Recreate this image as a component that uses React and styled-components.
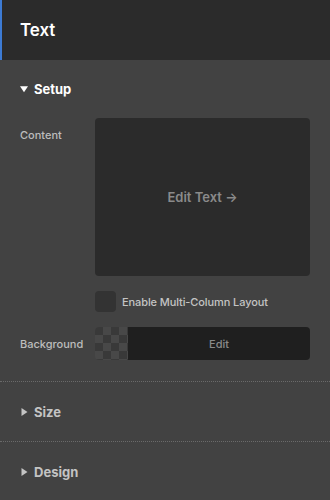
import React from "react";
import styled, { createGlobalStyle } from "styled-components";

const Global = createGlobalStyle`
  html, body { margin: 0; padding: 0; background: #424242; }
  body { font-family: "Inter", "Noto Sans", sans-serif; -webkit-font-smoothing: antialiased; }
`;

const Panel = styled.div`
  width: 330px;
  height: 500px;
  background: #424242;
  overflow: hidden;
  display: flex;
  flex-direction: column;
  & > * { flex: none; }
`;

const Header = styled.div`
  height: 60px;
  box-sizing: border-box;
  background: #2b2b2b;
  border-left: 2px solid #3d7bd4;
  display: flex;
  align-items: center;
  padding-left: 18px;
  color: #ffffff;
  font-size: 17px;
  font-weight: 600;
  letter-spacing: -0.1px;
`;

const Section = styled.div`
  border-bottom: ${(p) => (p.$last ? "none" : "1px dotted #6a6a6a")};
`;

const SectionHead = styled.div`
  height: ${(p) => (p.$open ? 58 : 59)}px;
  display: flex;
  align-items: center;
  padding-left: 20px;
  gap: 6px;
  color: ${(p) => (p.$open ? "#ffffff" : "#c4c4c4")};
  font-size: 13px;
  font-weight: 700;
`;

const Caret = styled.svg`
  width: 8px;
  height: 8px;
  flex: none;
  fill: currentColor;
`;

const Body = styled.div`
  padding: 0 20px 21px 20px;
  display: flex;
  flex-direction: column;
  gap: 15px;
`;

const Row = styled.div`
  display: grid;
  grid-template-columns: 75px 1fr;
  align-items: ${(p) => p.$align || "center"};
`;

const Label = styled.div`
  color: #bdbdbd;
  font-size: 11px;
  font-weight: 500;
  padding-top: ${(p) => p.$pt || 0}px;
`;

const EditBox = styled.div`
  height: 158px;
  background: #2b2b2b;
  border-radius: 4px;
  display: flex;
  align-items: center;
  justify-content: center;
  color: #8a8a8a;
  font-size: 13px;
  font-weight: 600;
`;

const Check = styled.div`
  width: 21px;
  height: 21px;
  border-radius: 4px;
  background: #333333;
  flex: none;
`;

const CheckRow = styled.div`
  display: flex;
  align-items: center;
  gap: 6px;
  color: #c4c4c4;
  font-size: 11px;
  font-weight: 500;
  letter-spacing: -0.1px;
`;

const ColorField = styled.div`
  height: 33px;
  display: flex;
  border-radius: 4px;
  overflow: hidden;
`;

const Checker = styled.div`
  width: 33px;
  flex: none;
  background-color: #484848;
  background-image:
    linear-gradient(45deg, #393939 25%, transparent 25%, transparent 75%, #393939 75%),
    linear-gradient(45deg, #393939 25%, transparent 25%, transparent 75%, #393939 75%);
  background-size: 16px 16px;
  background-position: 8px 0, 0 8px;
`;

const ColorEdit = styled.div`
  flex: 1;
  background: #1f1f1f;
  display: flex;
  align-items: center;
  justify-content: center;
  color: #8a8a8a;
  font-size: 11px;
  font-weight: 500;
`;

const Down = () => (
  <Caret viewBox="0 0 8 8"><path d="M0 1.2 H8 L4 7.2 Z" /></Caret>
);
const Right = () => (
  <Caret viewBox="0 0 8 8"><path d="M1.5 0 L7.5 4 L1.5 8 Z" /></Caret>
);

export default function App() {
  return (
    <>
      <Global />
      <Panel>
        <Header>Text</Header>
        <Section>
          <SectionHead $open>
            <Down />
            Setup
          </SectionHead>
          <Body>
            <Row $align="start">
              <Label $pt={10}>Content</Label>
              <EditBox>Edit Text →</EditBox>
            </Row>
            <Row>
              <div />
              <CheckRow>
                <Check />
                Enable Multi-Column Layout
              </CheckRow>
            </Row>
            <Row>
              <Label>Background</Label>
              <ColorField>
                <Checker />
                <ColorEdit>Edit</ColorEdit>
              </ColorField>
            </Row>
          </Body>
        </Section>
        <Section>
          <SectionHead>
            <Right />
            Size
          </SectionHead>
        </Section>
        <Section $last>
          <SectionHead>
            <Right />
            Design
          </SectionHead>
        </Section>
      </Panel>
    </>
  );
}
